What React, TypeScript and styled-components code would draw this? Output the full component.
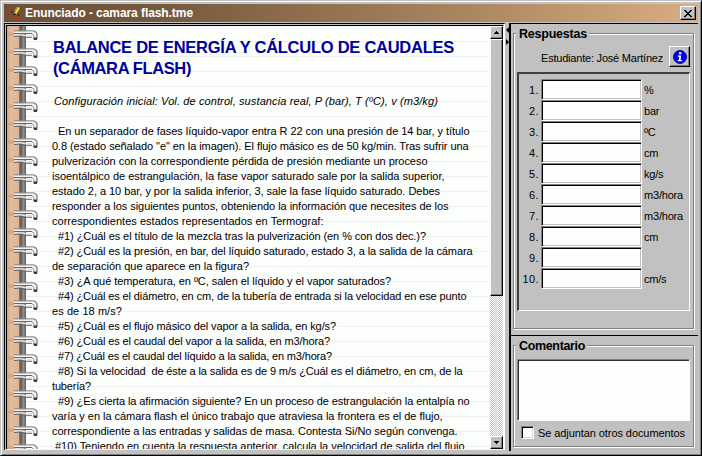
import React, { useLayoutEffect, useRef } from "react";
import styled, { createGlobalStyle, css } from "styled-components";

const GlobalStyle = createGlobalStyle`
  * { box-sizing: border-box; }
  body { margin: 0; background: #c1c1c1; font-family: "Liberation Sans", Arial, sans-serif; }
`;

const Frame = styled.div`
  width: 702px;
  height: 456px;
  overflow: hidden;
  display: flex;
  flex-direction: column;
  background: #c1c1c1;
  color: #000;
  font-size: 11px;
  line-height: 15px;
  padding: 2px 1px 0 2px;
  border: solid;
  border-width: 1px;
  border-color: #c1c1c1 #000 #000 #c1c1c1;
  box-shadow: inset 1px 1px 0 #fff, inset -1px -1px 0 #808080;
`;

const TitleBar = styled.header`
  flex: none;
  margin: 1px 2px 0 1px;
  height: 18px;
  display: flex;
  align-items: center;
  padding: 0 2px 0 3px;
  background: linear-gradient(90deg, #6c5038 0%, #76583e 22%, #a98660 66%, #daad80 100%);
`;

const TitleText = styled.h1`
  flex: 1;
  margin: 0 0 0 4px;
  color: #fff;
  font-size: 12px;
  line-height: 18px;
  font-weight: 700;
`;

const raised = css`
  border: 1px solid;
  border-color: #fff #000 #000 #fff;
  box-shadow: inset -1px -1px 0 #808080;
`;

const CloseButton = styled.button`
  ${raised}
  width: 16px;
  height: 14px;
  padding: 0;
  display: grid;
  place-items: center;
  background: #c1c1c1;
`;

const Workspace = styled.main`
  flex: 1;
  min-height: 0;
  display: flex;
  padding: 1px 2px 4px 1px;
`;

const DocumentPane = styled.section`
  width: 501px;
  height: 427px;
  display: flex;
  border: solid;
  border-width: 3px 2px 1px 3px;
  border-color: #000 #fff #f4f4f4 #000;
  border-left-style: double;
  border-top-style: double;
`;

const Page = styled.div`
  width: 483px;
  display: flex;
  overflow: hidden;
  background-color: #fcfefc;
  background-image: linear-gradient(#f1eff2 1px, transparent 1px);
  background-size: 100% 15px;
`;

const Binding = styled.svg`
  flex: none;
  width: 32px;
  height: 423px;
`;

const Copy = styled.article`
  flex: none;
  margin-left: 13px;
  width: 430px;
  padding-top: 11px;
`;

const DocTitle = styled.h2`
  margin: 0 0 15px;
  padding-left: 1px;
  color: #000099;
  font-size: 16.5px;
  line-height: 21px;
  font-weight: 700;
`;

const Setup = styled.p`
  margin: 0 0 15px;
  padding-left: 2px;
  font-style: italic;
`;

const Paragraph = styled.p<{ $indent?: number }>`
  margin: 0;
  height: 15px;
  padding-left: ${(p) => p.$indent ?? 0}px;
`;

const FitText = styled.span`
  display: inline-block;
  white-space: pre;
`;

function Fit({ width, children }: { width: number; children: string }) {
  const ref = useRef<HTMLSpanElement>(null);
  useLayoutEffect(() => {
    const el = ref.current;
    if (!el) return;
    el.style.letterSpacing = "0px";
    const natural = el.getBoundingClientRect().width;
    el.style.letterSpacing = `${(width - natural) / children.length}px`;
  }, [width, children]);
  return <FitText ref={ref}>{children}</FitText>;
}

const ScrollTrack = styled.div`
  width: 13px;
  display: flex;
  flex-direction: column;
  justify-content: space-between;
  background: repeating-conic-gradient(#c1c1c1 0 25%, #fff 0 50%) 0 0 / 2px 2px;
`;

const ScrollButton = styled.button`
  ${raised}
  flex: none;
  width: 13px;
  height: 13px;
  padding: 0;
  display: grid;
  place-items: center;
  background: #c1c1c1;
`;

const ScrollThumb = styled.div`
  ${raised}
  width: 13px;
  height: 257px;
  background: #c1c1c1;
`;

const ScrollTop = styled.div`
  display: flex;
  flex-direction: column;
`;

const Splitter = styled.div`
  width: 4px;
  padding-top: 4px;
  display: flex;
  flex-direction: column;
  align-items: flex-end;
  gap: 6px;
`;

const SidePane = styled.aside`
  flex: 1;
  display: flex;
  flex-direction: column;
  height: 428px;
  border-left: 2px solid #000;
`;

const Section = styled.div<{ $height: number }>`
  height: ${(p) => p.$height}px;
  border-top: 1px solid #000;
  padding: 9px 4px 0 2px;
`;

const Group = styled.div<{ $height: number }>`
  height: ${(p) => p.$height}px;
  display: flex;
  flex-direction: column;
  padding: 0 3px;
  border: 1px solid #808080;
  box-shadow: inset 1px 1px 0 #fff, 1px 1px 0 #fff;
`;

const GroupTitle = styled.h3`
  align-self: flex-start;
  margin: -7px 0 0 -1px;
  padding: 0 2px 0 3px;
  height: 16px;
  background: #c1c1c1;
  font-size: 12.5px;
  line-height: 15px;
  font-weight: 700;
`;

const Student = styled.div`
  display: flex;
  justify-content: flex-end;
  margin-top: 3px;
  gap: 6px;
  height: 22px;
  line-height: 24px;
`;

const InfoButton = styled.button`
  ${raised}
  width: 21px;
  height: 21px;
  padding: 0;
  display: grid;
  place-items: center;
  background: #c1c1c1;
`;

const Answers = styled.div`
  height: 239px;
  margin-top: 4px;
  padding-top: 5px;
  border: 2px solid;
  border-color: #404040 #fff #fff #404040;
  border-right-width: 1px;
  border-bottom-width: 1px;
`;

const AnswerRow = styled.label`
  display: grid;
  grid-template-columns: 20px 101px 1fr;
  column-gap: 2px;
  height: 21px;
  line-height: 22px;
`;

const AnswerNumber = styled.span`
  text-align: right;
  letter-spacing: 0.4px;
`;

const AnswerInput = styled.input`
  width: 101px;
  height: 21px;
  padding: 0 2px;
  border: 1px solid;
  border-color: #808080 #fff #fff #808080;
  outline: 0;
  box-shadow: inset 1px 1px 0 #000, inset -1px -1px 0 #c1c1c1;
  background: #fcfefc;
`;

const Unit = styled.span`
  letter-spacing: -0.2px;
`;

const Comment = styled.textarea`
  flex: none;
  width: 173px;
  height: 62px;
  margin-top: 4px;
  resize: none;
  border: 1px solid;
  border-color: #808080 #fff #fff #808080;
  box-shadow: inset 1px 1px 0 #303030;
  background: #fcfefc;
`;

const CheckRow = styled.label`
  display: flex;
  margin: 5px 0 0 4px;
  gap: 4px;
`;

const CheckBox = styled.input`
  appearance: none;
  width: 13px;
  height: 13px;
  margin: 0;
  border: 1px solid;
  border-color: #808080 #fff #fff #808080;
  box-shadow: inset 1px 1px 0 #000, inset -1px -1px 0 #d8d8d8;
  background: #fff;
`;

type Line = [text: string, indent: number, right: number];

const lines: Line[] = [
  ["En un separador de fases líquido-vapor entra R 22 con una presión de 14 bar, y título", 6, 469.5],
  ["0.8 (estado señalado \"e\" en la imagen). El flujo másico es de 50 kg/min. Tras sufrir una", 0, 468.5],
  ["pulverización con la correspondiente pérdida de presión mediante un proceso", 0, 427.5],
  ["isoentálpico de estrangulación, la fase vapor saturado sale por la salida superior,", 0, 444.5],
  ["estado 2, a 10 bar, y por la salida inferior, 3, sale la fase líquido saturado. Debes", 0, 440],
  ["responder a los siguientes puntos, obteniendo la información que necesites de los", 0, 448.5],
  ["correspondientes estados representados en Termograf:", 0, 323.5],
  ["#1) ¿Cuál es el título de la mezcla tras la pulverización (en % con dos dec.)?", 6, 426],
  ["#2) ¿Cuál es la presión, en bar, del líquido saturado, estado 3, a la salida de la cámara", 6, 472.5],
  ["de separación que aparece en la figura?", 0, 249],
  ["#3) ¿A qué temperatura, en ºC, salen el líquido y el vapor saturados?", 6, 391],
  ["#4) ¿Cuál es el diámetro, en cm, de la tubería de entrada si la velocidad en ese punto", 6, 466.5],
  ["es de 18 m/s?", 0, 122],
  ["#5) ¿Cuál es el flujo másico del vapor a la salida, en kg/s?", 6, 336],
  ["#6) ¿Cuál es el caudal del vapor a la salida, en m3/hora?", 6, 330],
  ["#7) ¿Cuál es el caudal del líquido a la salida, en m3/hora?", 6, 332],
  ["#8) Si la velocidad  de éste a la salida es de 9 m/s ¿Cuál es el diámetro, en cm, de la", 6, 462.5],
  ["tubería?", 0, 91],
  ["#9) ¿Es cierta la afirmación siguiente? En un proceso de estrangulación la entalpía no", 6, 469.5],
  ["varía y en la cámara flash el único trabajo que atraviesa la frontera es el de flujo,", 0, 442.5],
  ["correspondiente a las entradas y salidas de masa. Contesta Si/No según convenga.", 0, 457.5],
  ["#10) Teniendo en cuenta la respuesta anterior, calcula la velocidad de salida del flujo", 3, 464.5],
];

const units = ["%", "bar", "ºC", "cm", "kg/s", "m3/hora", "m3/hora", "cm", "", "cm/s"];

function Spiral() {
  return (
    <Binding viewBox="0 0 32 423" aria-hidden="true">
      <defs>
        <linearGradient id="cover">
          <stop offset="0" stopColor="#c9a58c" />
          <stop offset=".25" stopColor="#e6bd9c" />
          <stop offset="1" stopColor="#dcb494" />
        </linearGradient>
        <linearGradient id="edge">
          <stop offset="0" stopColor="#8a7a6e" />
          <stop offset=".3" stopColor="#5c5c5c" />
          <stop offset=".65" stopColor="#929292" />
          <stop offset="1" stopColor="#5c5c5c" />
        </linearGradient>
        <pattern id="rings" width="32" height="18" patternUnits="userSpaceOnUse">
          <ellipse cx="4" cy="8" rx="4" ry="2" fill="#c9957a" opacity=".5" />
          <path d="M7 5h19q4 .5 4 4v4" fill="none" stroke="#8c8c8c" strokeWidth="1.6" />
          <path d="M7 6.2h19q2 .3 2.5 2.5" fill="none" stroke="#f2f2f2" strokeWidth="1.6" />
          <path d="M7 7.5h18l2 2" fill="none" stroke="#666" strokeWidth="1" />
          <path d="M7 9.2q6-1 12 .6h6" fill="none" stroke="#e6e6e6" strokeWidth="1.6" />
          <path d="M7 10.5q5-1 11 .8h7" fill="none" stroke="#666" strokeWidth="1" />
          <path d="M26 9h2v3h-2z" fill="#c8c8c8" />
          <path d="M26 11.5h4v2.5h-3z" fill="#3c3c3c" />
        </pattern>
      </defs>
      <rect width="13" height="423" fill="url(#cover)" />
      <rect x="12" width="7" height="423" fill="url(#edge)" />
      <rect width="32" height="423" fill="url(#rings)" />
    </Binding>
  );
}

export default function App() {
  return (
    <>
      <GlobalStyle />
      <Frame>
        <TitleBar>
          <svg width="14" height="14" viewBox="0 0 14 14" fill="none">
            <path d="M1 2.5h2M4.5 1.5v3M2.5 4v4l2 3.5 3 1M9 12.5h3" stroke="#e02818" strokeWidth="1.2" />
            <path d="M6 8.5h3M11.5 8v2M5 5v2" stroke="#2b2218" />
            <path d="M12 1.5L8.5 7.5" stroke="#ffe64a" strokeWidth="2" />
            <path d="M10 1L7.5 6" stroke="#b89020" strokeWidth="1.2" />
          </svg>
          <TitleText><Fit width={168}>Enunciado - camara flash.tme</Fit></TitleText>
          <CloseButton aria-label="Cerrar">
            <svg width="8" height="7" viewBox="0 0 8 7" shapeRendering="crispEdges">
              <path d="M0 0h2v1h1v1h2V1h1V0h2v1H7v1H6v1H5v1h1v1h1v1h1v1H6V6H5V5H3v1H2v1H0V6h1V5h1V4h1V3H2V2H1V1H0z" />
            </svg>
          </CloseButton>
        </TitleBar>
        <Workspace>
          <DocumentPane>
            <Page>
              <Spiral />
              <Copy>
                <DocTitle>
                  <Fit width={401}>BALANCE DE ENERGÍA Y CÁLCULO DE CAUDALES</Fit>
                  <br />
                  <Fit width={138}>(CÁMARA FLASH)</Fit>
                </DocTitle>
                <Setup><Fit width={384}>Configuración inicial: Vol. de control, sustancia real, P (bar), T (ºC), v (m3/kg)</Fit></Setup>
                {lines.map(([text, indent, right]) => (
                  <Paragraph key={text} $indent={indent}>
                    <Fit width={right - 52 - indent}>{text}</Fit>
                  </Paragraph>
                ))}
              </Copy>
            </Page>
            <ScrollTrack>
              <ScrollTop>
                <ScrollButton aria-label="Subir">
                  <svg width="5" height="3" viewBox="0 0 5 3" shapeRendering="crispEdges"><path d="M2 0h1v1h1v1h1v1H0V2h1V1h1z" /></svg>
                </ScrollButton>
                <ScrollThumb />
              </ScrollTop>
              <ScrollButton aria-label="Bajar">
                <svg width="5" height="3" viewBox="0 0 5 3" shapeRendering="crispEdges"><path d="M0 0h5v1H4v1H3v1H2V2H1V1H0z" /></svg>
              </ScrollButton>
            </ScrollTrack>
          </DocumentPane>
          <Splitter>
            <svg width="3" height="6" viewBox="0 0 3 6"><path d="M3 0v6L0 3z" /></svg>
            <svg width="3" height="6" viewBox="0 0 3 6"><path d="M0 0v6l3-3z" /></svg>
          </Splitter>
          <SidePane>
            <Section $height={312}>
              <Group $height={296}>
                <GroupTitle><Fit width={68}>Respuestas</Fit></GroupTitle>
                <Student>
                  <Fit width={122}>Estudiante: José Martínez</Fit>
                  <InfoButton aria-label="Información">
                    <svg width="14" height="14" viewBox="0 0 14 14">
                      <circle cx="7" cy="7" r="6.5" fill="#0000f0" stroke="#10107a" />
                      <path d="M6 2.3h2.4v2H6zM4.8 5.5h3.4L7.6 10h1.3v1.3H4.8V10h.9l.5-3.2H4.8z" fill="#fff" />
                    </svg>
                  </InfoButton>
                </Student>
                <Answers>
                  {units.map((unit, i) => (
                    <AnswerRow key={i}>
                      <AnswerNumber>{i + 1}.</AnswerNumber>
                      <AnswerInput />
                      <Unit>{unit}</Unit>
                    </AnswerRow>
                  ))}
                </Answers>
              </Group>
            </Section>
            <Section $height={116}>
              <Group $height={102}>
                <GroupTitle><Fit width={66}>Comentario</Fit></GroupTitle>
                <Comment />
                <CheckRow>
                  <CheckBox type="checkbox" />
                  <Fit width={147}>Se adjuntan otros documentos</Fit>
                </CheckRow>
              </Group>
            </Section>
          </SidePane>
        </Workspace>
      </Frame>
    </>
  );
}
